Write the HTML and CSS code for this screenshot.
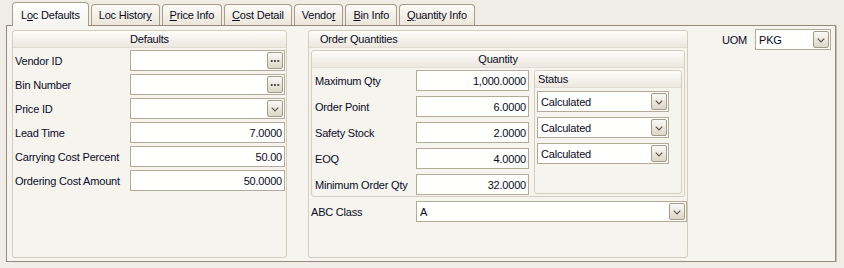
FILE: index.html
```html
<!DOCTYPE html>
<html lang="en">

<head>
    <meta charset="UTF-8">
    <title>Item Location - Loc Defaults</title>
    <link rel="stylesheet" href="styles.css">
</head>

<body>
    <div class="window">
        <div class="tabs">
            <div class="tab active">L<u>o</u>c Defaults</div>
            <div class="tab">Loc Histor<u>y</u></div>
            <div class="tab"><u>P</u>rice Info</div>
            <div class="tab"><u>C</u>ost Detail</div>
            <div class="tab">Vendo<u>r</u></div>
            <div class="tab"><u>B</u>in Info</div>
            <div class="tab"><u>Q</u>uantity Info</div>
        </div>

        <div class="panel">
            <section class="group defaults">
                <div class="group-head center">Defaults</div>
                <div class="form">
                    <label>Vendor ID</label>
                    <div class="field">
                        <span class="value"></span>
                        <span class="btn">
                            <svg width="15" height="16" viewBox="0 0 15 16" fill="#4a433b">
                                <rect x="3" y="7" width="2" height="2" />
                                <rect x="6.5" y="7" width="2" height="2" />
                                <rect x="10" y="7" width="2" height="2" />
                            </svg>
                        </span>
                    </div>

                    <label>Bin Number</label>
                    <div class="field">
                        <span class="value"></span>
                        <span class="btn">
                            <svg width="15" height="16" viewBox="0 0 15 16" fill="#4a433b">
                                <rect x="3" y="7" width="2" height="2" />
                                <rect x="6.5" y="7" width="2" height="2" />
                                <rect x="10" y="7" width="2" height="2" />
                            </svg>
                        </span>
                    </div>

                    <label>Price ID</label>
                    <div class="field">
                        <span class="value"></span>
                        <span class="btn">
                            <svg width="15" height="16" viewBox="0 0 15 16" fill="none" stroke="#5b5248" stroke-width="1.2">
                                <polyline points="4,6.5 7.5,10 11,6.5" />
                            </svg>
                        </span>
                    </div>

                    <label>Lead Time</label>
                    <div class="field num"><span class="value">7.0000</span></div>

                    <label>Carrying Cost Percent</label>
                    <div class="field num"><span class="value">50.00</span></div>

                    <label>Ordering Cost Amount</label>
                    <div class="field num"><span class="value">50.0000</span></div>
                </div>
            </section>

            <section class="group orders">
                <div class="group-head">Order Quantities</div>

                <section class="group quantity">
                    <div class="group-head center">Quantity</div>
                    <div class="qty-body">
                        <div class="qty-form">
                            <label>Maximum Qty</label>
                            <div class="field num"><span class="value">1,000.0000</span></div>

                            <label>Order Point</label>
                            <div class="field num"><span class="value">6.0000</span></div>

                            <label>Safety Stock</label>
                            <div class="field num"><span class="value">2.0000</span></div>

                            <label>EOQ</label>
                            <div class="field num"><span class="value">4.0000</span></div>

                            <label>Minimum Order Qty</label>
                            <div class="field num"><span class="value">32.0000</span></div>
                        </div>

                        <section class="group status">
                            <div class="group-head">Status</div>
                            <div class="status-list">
                                <div class="field">
                                    <span class="value">Calculated</span>
                                    <span class="btn">
                                        <svg width="15" height="16" viewBox="0 0 15 16" fill="none" stroke="#5b5248" stroke-width="1.2">
                                            <polyline points="4,6.5 7.5,10 11,6.5" />
                                        </svg>
                                    </span>
                                </div>
                                <div class="field">
                                    <span class="value">Calculated</span>
                                    <span class="btn">
                                        <svg width="15" height="16" viewBox="0 0 15 16" fill="none" stroke="#5b5248" stroke-width="1.2">
                                            <polyline points="4,6.5 7.5,10 11,6.5" />
                                        </svg>
                                    </span>
                                </div>
                                <div class="field">
                                    <span class="value">Calculated</span>
                                    <span class="btn">
                                        <svg width="15" height="16" viewBox="0 0 15 16" fill="none" stroke="#5b5248" stroke-width="1.2">
                                            <polyline points="4,6.5 7.5,10 11,6.5" />
                                        </svg>
                                    </span>
                                </div>
                            </div>
                        </section>
                    </div>
                </section>

                <div class="abc-row">
                    <label>ABC Class</label>
                    <div class="field">
                        <span class="value">A</span>
                        <span class="btn">
                            <svg width="15" height="16" viewBox="0 0 15 16" fill="none" stroke="#5b5248" stroke-width="1.2">
                                <polyline points="4,6.5 7.5,10 11,6.5" />
                            </svg>
                        </span>
                    </div>
                </div>
            </section>

            <div class="uom">
                <label>UOM</label>
                <div class="field">
                    <span class="value">PKG</span>
                    <span class="btn">
                        <svg width="15" height="16" viewBox="0 0 15 16" fill="none" stroke="#5b5248" stroke-width="1.2">
                            <polyline points="4,6.5 7.5,10 11,6.5" />
                        </svg>
                    </span>
                </div>
            </div>
        </div>
    </div>
</body>

</html>
```

FILE: styles.css
```css
:root {
    --page-bg: #f0ede6;
    --panel-bg: #f5f4ef;
    --panel-border: #978a78;
    --group-border: #d4ccbd;
    --input-border: #b5aa98;
    --input-bg: #fffffd;
    --text: #0a0a1e;
}

* {
    margin: 0;
    padding: 0;
    box-sizing: border-box;
}

body {
    background: var(--page-bg);
    color: var(--text);
    font-family: "Liberation Sans", Arial, sans-serif;
    font-size: 11px;
    letter-spacing: -0.2px;
}

.window {
    padding: 2px 0 0 6px;
}

/* tab strip */
.tabs {
    display: flex;
    align-items: flex-end;
    gap: 2px;
    height: 23px;
    padding-left: 6px;
}

.tab {
    height: 21px;
    padding: 0 7px;
    display: flex;
    align-items: center;
    border: 1px solid #a89d8b;
    border-bottom: none;
    border-radius: 4px 4px 0 0;
    background: linear-gradient(180deg, #fcfbf8, #ebe6da);
    white-space: nowrap;
}

.tab.active {
    height: 24px;
    margin-bottom: -1px;
    padding: 0 8px;
    background: linear-gradient(180deg, #fefefd, var(--panel-bg));
    position: relative;
    z-index: 1;
}

.tab u {
    text-underline-offset: 1px;
}

/* tab page */
.panel {
    width: 830px;
    height: 237px;
    border: 1px solid var(--panel-border);
    box-shadow: 1px 1px 0 #c8bfb0;
    background: var(--panel-bg);
    display: flex;
    align-items: flex-start;
    padding: 4px 0 0 5px;
}

/* group boxes */
.group {
    border: 1px solid var(--group-border);
    border-radius: 3px;
    background: var(--panel-bg);
}

.group-head {
    height: 17px;
    display: flex;
    align-items: center;
    padding-left: 11px;
    border-bottom: 1px solid #e2ddd1;
    border-radius: 3px 3px 0 0;
    background: linear-gradient(180deg, #fdfcfa, #ece8df);
}

.group-head.center {
    justify-content: center;
    padding-left: 0;
}

.defaults {
    width: 275px;
    height: 228px;
}

.form {
    display: grid;
    grid-template-columns: 115px 155px;
    row-gap: 3px;
    padding: 2px 0 0 2px;
}

label {
    display: flex;
    align-items: center;
    height: 21px;
    white-space: nowrap;
}

/* inputs and combos */
.field {
    height: 21px;
    display: flex;
    align-items: center;
    border: 1px solid var(--input-border);
    background: var(--input-bg);
    padding: 0 1px 0 3px;
}

.field .value {
    flex: 1;
    white-space: nowrap;
}

.field.num .value {
    text-align: right;
    padding-right: 1px;
}

.btn {
    width: 16px;
    height: 17px;
    display: flex;
    border: 1px solid #a49a89;
    border-radius: 2px;
    background: linear-gradient(180deg, #fbfaf7, #ddd6c7);
}

.orders {
    width: 380px;
    height: 228px;
    margin-left: 21px;
}

.quantity {
    width: 374px;
    height: 147px;
    margin: 2px 0 0 2px;
}

.qty-body {
    display: flex;
    gap: 5px;
    padding: 2px 0 0 3px;
}

.qty-form {
    display: grid;
    grid-template-columns: 101px 113px;
    row-gap: 5px;
}

.status {
    width: 148px;
    height: 124px;
}

.status .group-head {
    padding-left: 3px;
}

.status-list {
    display: flex;
    flex-direction: column;
    gap: 5px;
    padding: 3px 0 0 2px;
}

.status-list .field {
    width: 132px;
}

.abc-row {
    display: grid;
    grid-template-columns: 105px 271px;
    margin: 4px 0 0 2px;
}

.uom {
    display: flex;
    gap: 8px;
    margin: -1px 0 0 34px;
}

.uom .field {
    width: 76px;
}
```
